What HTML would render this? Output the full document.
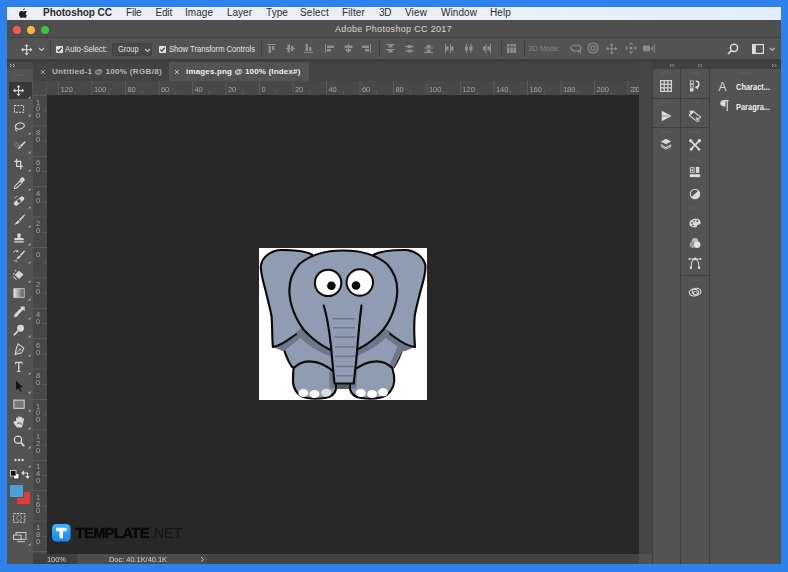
<!DOCTYPE html><html><head><meta charset="utf-8"><title>Adobe Photoshop CC 2017</title><style>
html,body{margin:0;padding:0;background:#2e82ee;}
#app{position:absolute;left:0;top:0;width:788px;height:572px;overflow:hidden;filter:blur(0.550px);}
body{width:788px;height:572px;overflow:hidden;background:#2e82ee;position:relative;font-family:"Liberation Sans",sans-serif;}
.a{position:absolute;}
.t{position:absolute;white-space:nowrap;}
svg{position:absolute;overflow:visible;}
#menubar{left:7px;top:6.800px;width:773.500px;height:13.500px;background:linear-gradient(90deg,#ecEFF5 0%,#ebeff5 60%,#e3eefa 100%);}
#title{left:7px;top:20.300px;width:773.500px;height:18px;background:#4f4f4f;border-bottom:1.500px solid #424242;box-sizing:border-box;height:18px}
#opt{left:7px;top:38px;width:773.500px;height:21px;background:#535353;}
#gap{left:7px;top:59px;width:773.500px;height:3px;background:#3e3e3e;}
#tabs{left:32px;top:62px;width:607px;height:19px;background:#444;}
#tools{left:7px;top:62px;width:26px;height:502px;background:#535353;}
#canvas{left:47px;top:94.500px;width:592px;height:459.500px;background:#282828;}
#hr{left:32px;top:81px;width:607px;height:14px;background:#484848;}
#vr{left:33px;top:95px;width:14px;height:459px;background:#484848;}
#status{left:32px;top:554px;width:607px;height:10px;background:#444;}
#vs{left:639px;top:62px;width:13px;height:502px;background:#464646;}
#panels{left:652px;top:62px;width:128.500px;height:502px;background:#535353;}
.cb{position:absolute;width:7px;height:7px;background:#e4e4e4;border-radius:1px;}
</style></head><body><div id="app">
<div id="menubar" class="a"></div>
<svg style="left:18px;top:7.500px" width="10" height="11" viewBox="0 0 10 11"><path d="M6.9 0.2c0 .9-.8 1.900-1.800 1.900C5 1.200 5.900 .3 6.900 .2zM8.800 3.900C8.100 4.300 7.700 4.900 7.700 5.700c0 .9.500 1.600 1.300 1.900-.3.900-1.200 2.400-2.100 2.400-.6 0-.9-.4-1.700-.4s-1.100.4-1.700.4C2.400 10 1 7.900 1 5.900 1 4 2.200 3 3.400 3c.7 0 1.300.4 1.800.4.400 0 1.100-.5 2-.5.700 0 1.300.4 1.600 1z" fill="#1c1c20"/></svg>
<span class="t" id="m0" style="left:43px;top:8.20px;font-size:10px;line-height:10px;color:#2a2a30;letter-spacing:-0.037px;font-weight:bold;">Photoshop CC</span>
<span class="t" id="m1" style="left:126px;top:8.20px;font-size:10px;line-height:10px;color:#2a2a30;letter-spacing:-0.156px;">File</span>
<span class="t" id="m2" style="left:155.5px;top:8.20px;font-size:10px;line-height:10px;color:#2a2a30;letter-spacing:-0.184px;">Edit</span>
<span class="t" id="m3" style="left:185px;top:8.20px;font-size:10px;line-height:10px;color:#2a2a30;letter-spacing:0.041px;">Image</span>
<span class="t" id="m4" style="left:227px;top:8.20px;font-size:10px;line-height:10px;color:#2a2a30;letter-spacing:-0.003px;">Layer</span>
<span class="t" id="m5" style="left:266px;top:8.20px;font-size:10px;line-height:10px;color:#2a2a30;letter-spacing:0.078px;">Type</span>
<span class="t" id="m6" style="left:300px;top:8.20px;font-size:10px;line-height:10px;color:#2a2a30;letter-spacing:0.201px;">Select</span>
<span class="t" id="m7" style="left:342px;top:8.20px;font-size:10px;line-height:10px;color:#2a2a30;letter-spacing:0.128px;">Filter</span>
<span class="t" id="m8" style="left:379px;top:8.20px;font-size:10px;line-height:10px;color:#2a2a30;letter-spacing:-0.398px;">3D</span>
<span class="t" id="m9" style="left:405px;top:8.20px;font-size:10px;line-height:10px;color:#2a2a30;letter-spacing:0.125px;">View</span>
<span class="t" id="m10" style="left:441px;top:8.20px;font-size:10px;line-height:10px;color:#2a2a30;letter-spacing:0.070px;">Window</span>
<span class="t" id="m11" style="left:490px;top:8.20px;font-size:10px;line-height:10px;color:#2a2a30;letter-spacing:0.105px;">Help</span>
<div id="title" class="a"></div>
<div class="a" style="left:12.5px;top:26px;width:8px;height:8px;border-radius:50%;background:#f25b57"></div>
<div class="a" style="left:26.8px;top:26px;width:8px;height:8px;border-radius:50%;background:#f5b93a"></div>
<div class="a" style="left:41px;top:26px;width:8px;height:8px;border-radius:50%;background:#3ec144"></div>
<span class="t" id="ttl" style="left:335px;top:25.00px;font-size:9px;line-height:9px;color:#d6d6d6;letter-spacing:0.322px;">Adobe Photoshop CC 2017</span>
<div id="opt" class="a"></div>
<div id="gap" class="a"></div>
<svg style="left:20.8px;top:43.599999999999994px" width="11.399999999999999" height="11.399999999999999" viewBox="-6 -6 12 12"><path d="M0-6L2.200-3.500H.6V-.6H3.500V-2.200L6 0 3.500 2.200V.6H.6V3.500H2.200L0 6-2.200 3.500H-.6V.6H-3.500V2.200L-6 0-3.500-2.200V-.6H-.6V-3.500H-2.200Z" fill="#dcdcdc"/></svg>
<svg style="left:38.5px;top:48.25px" width="5" height="2.5" viewBox="0 0 5 2.5"><path d="M0 0L2.5 2.5L5 0" fill="none" stroke="#c8c8c8" stroke-width="1.1"/></svg>
<div class="a" style="left:50px;top:41px;width:1px;height:16px;background:#3f3f3f"></div>
<div class="cb" style="left:55.5px;top:45.5px"></div><svg style="left:55.5px;top:45.5px" width="7" height="7" viewBox="0 0 7 7"><path d="M1.400 3.600L2.900 5.100L5.700 1.700" fill="none" stroke="#3a3a3a" stroke-width="1.300"/></svg>
<span class="t" id="o1" style="left:65px;top:44.15px;font-size:9.5px;line-height:9.5px;color:#e4e4e4;transform:scaleX(0.8116);transform-origin:0 50%;">Auto-Select:</span>
<div class="a" style="left:112px;top:42.500px;width:40px;height:13px;background:#484848;border:1px solid #424242;box-sizing:border-box;border-radius:1px"></div>
<span class="t" id="o2" style="left:118px;top:44.15px;font-size:9.5px;line-height:9.5px;color:#e4e4e4;transform:scaleX(0.7763);transform-origin:0 50%;">Group</span>
<svg style="left:144.5px;top:48.55px" width="5" height="2.5" viewBox="0 0 5 2.5"><path d="M0 0L2.5 2.5L5 0" fill="none" stroke="#c8c8c8" stroke-width="1.1"/></svg>
<div class="cb" style="left:158.5px;top:45.5px"></div><svg style="left:158.5px;top:45.5px" width="7" height="7" viewBox="0 0 7 7"><path d="M1.400 3.600L2.900 5.100L5.700 1.700" fill="none" stroke="#3a3a3a" stroke-width="1.300"/></svg>
<span class="t" id="o3" style="left:169px;top:44.15px;font-size:9.5px;line-height:9.5px;color:#e4e4e4;transform:scaleX(0.8023);transform-origin:0 50%;">Show Transform Controls</span>
<div class="a" style="left:261px;top:41px;width:1px;height:16px;background:#3f3f3f"></div>
<svg style="left:266.5px;top:44.2px" width="9" height="9" viewBox="0 0 9 9" fill="#8e8e8e"><rect x="0" y="0" width="9" height="1"/><rect x="1.500" y="2" width="2.500" height="7"/><rect x="5" y="2" width="2.500" height="4"/></svg>
<svg style="left:285.5px;top:44.2px" width="9" height="9" viewBox="0 0 9 9" fill="#8e8e8e"><rect x="0" y="4" width="9" height="1"/><rect x="1.500" y="0.500" width="2.500" height="8"/><rect x="5" y="2" width="2.500" height="5"/></svg>
<svg style="left:303.5px;top:44.2px" width="9" height="9" viewBox="0 0 9 9" fill="#8e8e8e"><rect x="0" y="8" width="9" height="1"/><rect x="1.500" y="0" width="2.500" height="7"/><rect x="5" y="3" width="2.500" height="4"/></svg>
<svg style="left:325.0px;top:44.2px" width="9" height="9" viewBox="0 0 9 9" fill="#8e8e8e"><rect x="0" y="0" width="1" height="9"/><rect x="2" y="1.500" width="7" height="2.500"/><rect x="2" y="5" width="4" height="2.500"/></svg>
<svg style="left:343.5px;top:44.2px" width="9" height="9" viewBox="0 0 9 9" fill="#8e8e8e"><rect x="4" y="0" width="1" height="9"/><rect x="0.500" y="1.500" width="8" height="2.500"/><rect x="2" y="5" width="5" height="2.500"/></svg>
<svg style="left:361.5px;top:44.2px" width="9" height="9" viewBox="0 0 9 9" fill="#8e8e8e"><rect x="8" y="0" width="1" height="9"/><rect x="0" y="1.500" width="7" height="2.500"/><rect x="3" y="5" width="4" height="2.500"/></svg>
<svg style="left:386.0px;top:44.2px" width="9" height="9" viewBox="0 0 9 9" fill="#8e8e8e"><rect x="0" y="0" width="9" height="1"/><rect x="0" y="5" width="9" height="1"/><rect x="2.500" y="1" width="4" height="2.500"/><rect x="2.500" y="6" width="4" height="2.500"/></svg>
<svg style="left:404.5px;top:44.2px" width="9" height="9" viewBox="0 0 9 9" fill="#8e8e8e"><rect x="0" y="2" width="9" height="1"/><rect x="0" y="6.500" width="9" height="1"/><rect x="2.500" y="1" width="4" height="3"/><rect x="2.500" y="5.500" width="4" height="3"/></svg>
<svg style="left:424.0px;top:44.2px" width="9" height="9" viewBox="0 0 9 9" fill="#8e8e8e"><rect x="0" y="3.500" width="9" height="1"/><rect x="0" y="8" width="9" height="1"/><rect x="2.500" y="1" width="4" height="2.500"/><rect x="2.500" y="5.500" width="4" height="2.500"/></svg>
<svg style="left:445.0px;top:44.2px" width="9" height="9" viewBox="0 0 9 9" fill="#8e8e8e"><rect x="0" y="0" width="1" height="9"/><rect x="5" y="0" width="1" height="9"/><rect x="1" y="2.500" width="2.500" height="4"/><rect x="6" y="2.500" width="2.500" height="4"/></svg>
<svg style="left:463.5px;top:44.2px" width="9" height="9" viewBox="0 0 9 9" fill="#8e8e8e"><rect x="2" y="0" width="1" height="9"/><rect x="6.500" y="0" width="1" height="9"/><rect x="1" y="2.500" width="3" height="4"/><rect x="5.500" y="2.500" width="3" height="4"/></svg>
<svg style="left:482.0px;top:44.2px" width="9" height="9" viewBox="0 0 9 9" fill="#8e8e8e"><rect x="3.500" y="0" width="1" height="9"/><rect x="8" y="0" width="1" height="9"/><rect x="1" y="2.500" width="2.500" height="4"/><rect x="5.500" y="2.500" width="2.500" height="4"/></svg>
<svg style="left:507.0px;top:44.2px" width="9" height="9" viewBox="0 0 9 9" fill="#8e8e8e"><rect x="0" y="0" width="2.500" height="2.500"/><rect x="3.300" y="0" width="2.500" height="2.500"/><rect x="6.500" y="0" width="2.500" height="2.500"/><rect x="0" y="3.500" width="2.500" height="5.500"/><rect x="3.300" y="3.500" width="2.500" height="5.500"/><rect x="6.500" y="3.500" width="2.500" height="5.500"/></svg>
<div class="a" style="left:379px;top:41px;width:1px;height:16px;background:#3f3f3f"></div>
<div class="a" style="left:501px;top:41px;width:1px;height:16px;background:#3f3f3f"></div>
<div class="a" style="left:524px;top:41px;width:1px;height:16px;background:#3f3f3f"></div>
<span class="t" id="o4" style="left:528px;top:45.05px;font-size:7.5px;line-height:7.5px;color:#858585;letter-spacing:-0.002px;">3D Mode:</span>
<svg style="left:569.500px;top:42.200px" width="12" height="12" viewBox="0 0 12 12" fill="none" stroke="#8a8a8a" stroke-width="1.200"><ellipse cx="6" cy="6" rx="5" ry="3"/><path d="M8 9.500l2.500 1v-2.600" /></svg>
<svg style="left:587px;top:42.200px" width="12" height="12" viewBox="0 0 12 12" fill="none" stroke="#8a8a8a" stroke-width="1.200"><circle cx="6" cy="6" r="5"/><circle cx="6" cy="6" r="2.200"/></svg>
<svg style="left:606.0999999999999px;top:42.5px" width="11.399999999999999" height="11.399999999999999" viewBox="-6 -6 12 12"><path d="M0-6L2.200-3.500H.6V-.6H3.500V-2.200L6 0 3.500 2.200V.6H.6V3.500H2.200L0 6-2.200 3.500H-.6V.6H-3.500V2.200L-6 0-3.500-2.200V-.6H-.6V-3.500H-2.200Z" fill="#8a8a8a"/></svg>
<svg style="left:624.500px;top:42.200px" width="12" height="12" viewBox="-6 -6 12 12" fill="#8a8a8a"><path d="M0-6L2-3.500H-2ZM0 6L2 3.500H-2ZM-6 0L-3.500-2V2ZM6 0L3.500-2V2Z"/><circle r="1.600"/></svg>
<svg style="left:643px;top:43.700px" width="12" height="9" viewBox="0 0 12 9" fill="#8a8a8a"><rect x="0" y="1.500" width="7" height="6" rx="1"/><path d="M7.500 4.500L10 2V7Z"/><rect x="10.800" y="0.500" width="1" height="8"/></svg>
<svg style="left:727px;top:42.500px" width="12" height="12" viewBox="0 0 12 12" fill="none" stroke="#dcdcdc" stroke-width="1.500"><circle cx="7" cy="4.800" r="3.600"/><path d="M4.400 7.600L1 11"/></svg>
<svg style="left:752px;top:43.500px" width="12" height="10" viewBox="0 0 12 10"><rect x="0.600" y="0.600" width="10.800" height="8.800" fill="none" stroke="#dcdcdc" stroke-width="1.200"/><rect x="0.600" y="0.600" width="3.200" height="8.800" fill="#dcdcdc"/></svg>
<svg style="left:770.25px;top:48.15px" width="4.5" height="2.3" viewBox="0 0 4.5 2.3"><path d="M0 0L2.25 2.3L4.5 0" fill="none" stroke="#c8c8c8" stroke-width="1.1"/></svg>
<div id="tabs" class="a"></div>
<div class="a" style="left:33px;top:62px;width:135px;height:19px;background:#434343"></div>
<div class="a" style="left:168.500px;top:62px;width:140.500px;height:19px;background:#535353"></div>
<svg style="left:41px;top:69.5px" width="4" height="4" viewBox="0 0 4 4"><path d="M0 0L4 4M4 0L0 4" stroke="#a8a8a8" stroke-width="0.900"/></svg>
<span class="t" id="tab1" style="left:52px;top:67.80px;font-size:8px;line-height:8px;color:#b8b8b8;letter-spacing:0.336px;font-weight:bold;">Untitled-1 @ 100% (RGB/8)</span>
<svg style="left:174.5px;top:69.5px" width="4" height="4" viewBox="0 0 4 4"><path d="M0 0L4 4M4 0L0 4" stroke="#c8c8c8" stroke-width="0.900"/></svg>
<span class="t" id="tab2" style="left:186px;top:67.80px;font-size:8px;line-height:8px;color:#f0f0f0;letter-spacing:0.171px;font-weight:bold;">images.png @ 100% (Index#)</span>
<div id="hr" class="a"></div>
<div id="vr" class="a"></div>
<svg style="left:32px;top:81px" width="607" height="14" fill="#5b5b5b"><rect x="26.0" y="0" width="1" height="14"/><rect x="59.5" y="0" width="1" height="14"/><rect x="93.0" y="0" width="1" height="14"/><rect x="126.5" y="0" width="1" height="14"/><rect x="160.0" y="0" width="1" height="14"/><rect x="193.5" y="0" width="1" height="14"/><rect x="227.0" y="0" width="1" height="14"/><rect x="260.5" y="0" width="1" height="14"/><rect x="294.0" y="0" width="1" height="14"/><rect x="327.5" y="0" width="1" height="14"/><rect x="361.0" y="0" width="1" height="14"/><rect x="394.5" y="0" width="1" height="14"/><rect x="428.0" y="0" width="1" height="14"/><rect x="461.5" y="0" width="1" height="14"/><rect x="495.0" y="0" width="1" height="14"/><rect x="528.5" y="0" width="1" height="14"/><rect x="562.0" y="0" width="1" height="14"/><rect x="595.5" y="0" width="1" height="14"/><rect x="42.8" y="10" width="1" height="4"/><rect x="76.2" y="10" width="1" height="4"/><rect x="109.8" y="10" width="1" height="4"/><rect x="143.2" y="10" width="1" height="4"/><rect x="176.8" y="10" width="1" height="4"/><rect x="210.2" y="10" width="1" height="4"/><rect x="243.8" y="10" width="1" height="4"/><rect x="277.2" y="10" width="1" height="4"/><rect x="310.8" y="10" width="1" height="4"/><rect x="344.2" y="10" width="1" height="4"/><rect x="377.8" y="10" width="1" height="4"/><rect x="411.2" y="10" width="1" height="4"/><rect x="444.8" y="10" width="1" height="4"/><rect x="478.2" y="10" width="1" height="4"/><rect x="511.8" y="10" width="1" height="4"/><rect x="545.2" y="10" width="1" height="4"/><rect x="578.8" y="10" width="1" height="4"/></svg>
<span class="t" id="hr80" style="left:60.5px;top:85.55px;font-size:7.5px;line-height:7.5px;color:#a2a2a2;letter-spacing:-0.073px;">120</span>
<span class="t" id="hr100" style="left:94.0px;top:85.55px;font-size:7.5px;line-height:7.5px;color:#a2a2a2;letter-spacing:-0.073px;">100</span>
<span class="t" id="hr120" style="left:127.5px;top:85.55px;font-size:7.5px;line-height:7.5px;color:#a2a2a2;letter-spacing:-0.076px;">80</span>
<span class="t" id="hr140" style="left:161.0px;top:85.55px;font-size:7.5px;line-height:7.5px;color:#a2a2a2;letter-spacing:-0.076px;">60</span>
<span class="t" id="hr160" style="left:194.5px;top:85.55px;font-size:7.5px;line-height:7.5px;color:#a2a2a2;letter-spacing:-0.076px;">40</span>
<span class="t" id="hr180" style="left:228.0px;top:85.55px;font-size:7.5px;line-height:7.5px;color:#a2a2a2;letter-spacing:-0.076px;">20</span>
<span class="t" id="hr200" style="left:261.5px;top:85.55px;font-size:7.5px;line-height:7.5px;color:#a2a2a2;letter-spacing:-0.078px;">0</span>
<span class="t" id="hr220" style="left:295.0px;top:85.55px;font-size:7.5px;line-height:7.5px;color:#a2a2a2;letter-spacing:-0.076px;">20</span>
<span class="t" id="hr240" style="left:328.5px;top:85.55px;font-size:7.5px;line-height:7.5px;color:#a2a2a2;letter-spacing:-0.076px;">40</span>
<span class="t" id="hr260" style="left:362.0px;top:85.55px;font-size:7.5px;line-height:7.5px;color:#a2a2a2;letter-spacing:-0.076px;">60</span>
<span class="t" id="hr280" style="left:395.5px;top:85.55px;font-size:7.5px;line-height:7.5px;color:#a2a2a2;letter-spacing:-0.076px;">80</span>
<span class="t" id="hr300" style="left:429.0px;top:85.55px;font-size:7.5px;line-height:7.5px;color:#a2a2a2;letter-spacing:-0.073px;">100</span>
<span class="t" id="hr320" style="left:462.5px;top:85.55px;font-size:7.5px;line-height:7.5px;color:#a2a2a2;letter-spacing:-0.073px;">120</span>
<span class="t" id="hr340" style="left:496.0px;top:85.55px;font-size:7.5px;line-height:7.5px;color:#a2a2a2;letter-spacing:-0.073px;">140</span>
<span class="t" id="hr360" style="left:529.5px;top:85.55px;font-size:7.5px;line-height:7.5px;color:#a2a2a2;letter-spacing:-0.073px;">160</span>
<span class="t" id="hr380" style="left:563.0px;top:85.55px;font-size:7.5px;line-height:7.5px;color:#a2a2a2;letter-spacing:-0.073px;">180</span>
<span class="t" id="hr400" style="left:596.5px;top:85.55px;font-size:7.5px;line-height:7.5px;color:#a2a2a2;letter-spacing:-0.073px;">200</span>
<span class="t" id="hr420" style="left:630.0px;top:85.55px;font-size:7.5px;line-height:7.5px;color:#a2a2a2;letter-spacing:-1.338px;">220</span>
<svg style="left:33px;top:95px" width="14" height="459" fill="#5b5b5b"><rect x="0" y="0.0" width="14" height="1"/><rect x="0" y="30.4" width="14" height="1"/><rect x="0" y="60.8" width="14" height="1"/><rect x="0" y="91.2" width="14" height="1"/><rect x="0" y="121.6" width="14" height="1"/><rect x="0" y="152.0" width="14" height="1"/><rect x="0" y="182.4" width="14" height="1"/><rect x="0" y="212.8" width="14" height="1"/><rect x="0" y="243.2" width="14" height="1"/><rect x="0" y="273.6" width="14" height="1"/><rect x="0" y="304.0" width="14" height="1"/><rect x="0" y="334.4" width="14" height="1"/><rect x="0" y="364.8" width="14" height="1"/><rect x="0" y="395.2" width="14" height="1"/><rect x="0" y="425.6" width="14" height="1"/><rect x="0" y="456.0" width="14" height="1"/><rect x="10" y="15.2" width="4" height="1"/><rect x="10" y="45.6" width="4" height="1"/><rect x="10" y="76.0" width="4" height="1"/><rect x="10" y="106.4" width="4" height="1"/><rect x="10" y="136.8" width="4" height="1"/><rect x="10" y="167.2" width="4" height="1"/><rect x="10" y="197.6" width="4" height="1"/><rect x="10" y="228.0" width="4" height="1"/><rect x="10" y="258.4" width="4" height="1"/><rect x="10" y="288.8" width="4" height="1"/><rect x="10" y="319.2" width="4" height="1"/><rect x="10" y="349.6" width="4" height="1"/><rect x="10" y="380.0" width="4" height="1"/><rect x="10" y="410.4" width="4" height="1"/><rect x="10" y="440.8" width="4" height="1"/></svg>
<span class="t" style="left:35px;top:98.5px;font-size:7.500px;line-height:7px;color:#a2a2a2;width:6px;text-align:center">1</span>
<span class="t" style="left:35px;top:105.3px;font-size:7.500px;line-height:7px;color:#a2a2a2;width:6px;text-align:center">0</span>
<span class="t" style="left:35px;top:112.1px;font-size:7.500px;line-height:7px;color:#a2a2a2;width:6px;text-align:center">0</span>
<span class="t" style="left:35px;top:128.9px;font-size:7.500px;line-height:7px;color:#a2a2a2;width:6px;text-align:center">8</span>
<span class="t" style="left:35px;top:135.7px;font-size:7.500px;line-height:7px;color:#a2a2a2;width:6px;text-align:center">0</span>
<span class="t" style="left:35px;top:159.3px;font-size:7.500px;line-height:7px;color:#a2a2a2;width:6px;text-align:center">6</span>
<span class="t" style="left:35px;top:166.1px;font-size:7.500px;line-height:7px;color:#a2a2a2;width:6px;text-align:center">0</span>
<span class="t" style="left:35px;top:189.7px;font-size:7.500px;line-height:7px;color:#a2a2a2;width:6px;text-align:center">4</span>
<span class="t" style="left:35px;top:196.5px;font-size:7.500px;line-height:7px;color:#a2a2a2;width:6px;text-align:center">0</span>
<span class="t" style="left:35px;top:220.1px;font-size:7.500px;line-height:7px;color:#a2a2a2;width:6px;text-align:center">2</span>
<span class="t" style="left:35px;top:226.9px;font-size:7.500px;line-height:7px;color:#a2a2a2;width:6px;text-align:center">0</span>
<span class="t" style="left:35px;top:250.5px;font-size:7.500px;line-height:7px;color:#a2a2a2;width:6px;text-align:center">0</span>
<span class="t" style="left:35px;top:280.9px;font-size:7.500px;line-height:7px;color:#a2a2a2;width:6px;text-align:center">2</span>
<span class="t" style="left:35px;top:287.7px;font-size:7.500px;line-height:7px;color:#a2a2a2;width:6px;text-align:center">0</span>
<span class="t" style="left:35px;top:311.3px;font-size:7.500px;line-height:7px;color:#a2a2a2;width:6px;text-align:center">4</span>
<span class="t" style="left:35px;top:318.1px;font-size:7.500px;line-height:7px;color:#a2a2a2;width:6px;text-align:center">0</span>
<span class="t" style="left:35px;top:341.7px;font-size:7.500px;line-height:7px;color:#a2a2a2;width:6px;text-align:center">6</span>
<span class="t" style="left:35px;top:348.5px;font-size:7.500px;line-height:7px;color:#a2a2a2;width:6px;text-align:center">0</span>
<span class="t" style="left:35px;top:372.1px;font-size:7.500px;line-height:7px;color:#a2a2a2;width:6px;text-align:center">8</span>
<span class="t" style="left:35px;top:378.9px;font-size:7.500px;line-height:7px;color:#a2a2a2;width:6px;text-align:center">0</span>
<span class="t" style="left:35px;top:402.5px;font-size:7.500px;line-height:7px;color:#a2a2a2;width:6px;text-align:center">1</span>
<span class="t" style="left:35px;top:409.3px;font-size:7.500px;line-height:7px;color:#a2a2a2;width:6px;text-align:center">0</span>
<span class="t" style="left:35px;top:416.1px;font-size:7.500px;line-height:7px;color:#a2a2a2;width:6px;text-align:center">0</span>
<span class="t" style="left:35px;top:432.9px;font-size:7.500px;line-height:7px;color:#a2a2a2;width:6px;text-align:center">1</span>
<span class="t" style="left:35px;top:439.7px;font-size:7.500px;line-height:7px;color:#a2a2a2;width:6px;text-align:center">2</span>
<span class="t" style="left:35px;top:446.5px;font-size:7.500px;line-height:7px;color:#a2a2a2;width:6px;text-align:center">0</span>
<span class="t" style="left:35px;top:463.3px;font-size:7.500px;line-height:7px;color:#a2a2a2;width:6px;text-align:center">1</span>
<span class="t" style="left:35px;top:470.1px;font-size:7.500px;line-height:7px;color:#a2a2a2;width:6px;text-align:center">4</span>
<span class="t" style="left:35px;top:476.9px;font-size:7.500px;line-height:7px;color:#a2a2a2;width:6px;text-align:center">0</span>
<span class="t" style="left:35px;top:493.7px;font-size:7.500px;line-height:7px;color:#a2a2a2;width:6px;text-align:center">1</span>
<span class="t" style="left:35px;top:500.5px;font-size:7.500px;line-height:7px;color:#a2a2a2;width:6px;text-align:center">6</span>
<span class="t" style="left:35px;top:507.3px;font-size:7.500px;line-height:7px;color:#a2a2a2;width:6px;text-align:center">0</span>
<span class="t" style="left:35px;top:524.1px;font-size:7.500px;line-height:7px;color:#a2a2a2;width:6px;text-align:center">1</span>
<span class="t" style="left:35px;top:530.9px;font-size:7.500px;line-height:7px;color:#a2a2a2;width:6px;text-align:center">8</span>
<span class="t" style="left:35px;top:537.7px;font-size:7.500px;line-height:7px;color:#a2a2a2;width:6px;text-align:center">0</span>
<div class="a" style="left:33px;top:81px;width:14px;height:14px;background:#484848;border-right:1px dotted #585858;border-bottom:1px dotted #585858;box-sizing:border-box"></div>
<div id="canvas" class="a"></div>
<div id="status" class="a"></div>
<div class="a" style="left:32px;top:554px;width:45px;height:10px;background:#3f3f3f"></div>
<div class="a" style="left:77px;top:554px;width:130px;height:10px;background:#4c4c4c"></div>
<span class="t" id="st1" style="left:47px;top:555.55px;font-size:7.5px;line-height:7.5px;color:#d0d0d0;letter-spacing:-0.047px;">100%</span>
<span class="t" id="st2" style="left:109px;top:555.55px;font-size:7.5px;line-height:7.5px;color:#d0d0d0;letter-spacing:-0.050px;">Doc: 40.1K/40.1K</span>
<svg style="left:201px;top:556.500px" width="3" height="5" viewBox="0 0 3 5"><path d="M0 0L2.500 2.500L0 5" fill="none" stroke="#bdbdbd" stroke-width="1"/></svg>
<div id="vs" class="a"></div>
<div class="a" style="left:639px;top:554px;width:13px;height:10px;background:#515151"></div>
<div id="tools" class="a"></div>
<div class="a" style="left:9px;top:81.500px;width:23px;height:17.500px;background:#383838;border-radius:1px"></div>
<div class="a" style="left:7px;top:62px;width:26px;height:7px;background:#484848"></div>
<svg style="left:10px;top:63.800px" width="5.500" height="3" viewBox="0 0 5.500 3"><path d="M0 0L1.500 1.500L0 3M3 0L4.500 1.500L3 3" fill="none" stroke="#c4c4c4" stroke-width="0.900"/></svg>
<div class="a" style="left:14px;top:73.500px;width:11px;height:2px;background:#5a5a5a"></div>
<svg style="left:12.42px;top:84.42px" width="13.16" height="13.16" viewBox="-7 -7 14 14" preserveAspectRatio="none" fill="#d6d6d6" stroke="none"><path d="M0-6L2.200-3.500H.6V-.6H3.500V-2.200L6 0 3.500 2.200V.6H.6V3.500H2.200L0 6-2.200 3.500H-.6V.6H-3.500V2.200L-6 0-3.500-2.200V-.6H-.6V-3.500H-2.200Z"/></svg><svg style="left:28px;top:95.5px" width="2.500" height="2.500" viewBox="0 0 2.500 2.500"><path d="M2.500 0V2.500H0Z" fill="#b0b0b0"/></svg>
<svg style="left:12.98px;top:102.98px" width="12.04" height="12.04" viewBox="-7 -7 14 14" preserveAspectRatio="none" fill="#d6d6d6" stroke="none"><rect x="-5.300" y="-4" width="10.600" height="7.800" fill="none" stroke="#d6d6d6" stroke-width="1.200" stroke-dasharray="2.200 1.400"/></svg><svg style="left:28px;top:113.5px" width="2.500" height="2.500" viewBox="0 0 2.500 2.500"><path d="M2.500 0V2.500H0Z" fill="#b0b0b0"/></svg>
<svg style="left:12.98px;top:121.48px" width="12.04" height="12.04" viewBox="-7 -7 14 14" preserveAspectRatio="none" fill="#d6d6d6" stroke="none"><ellipse cx="1.200" cy="-1" rx="5.300" ry="3.600" fill="none" stroke="#d6d6d6" stroke-width="1.300" transform="rotate(-12)"/><path d="M-3.500 1.500C-4.500 3-3.500 4.500-2 5" fill="none" stroke="#d6d6d6" stroke-width="1.200"/></svg><svg style="left:28px;top:132.0px" width="2.500" height="2.500" viewBox="0 0 2.500 2.500"><path d="M2.500 0V2.500H0Z" fill="#b0b0b0"/></svg>
<svg style="left:13.98px;top:139.98px" width="12.04" height="12.04" viewBox="-7 -7 14 14" preserveAspectRatio="none" fill="#d6d6d6" stroke="none"><path d="M5.500-5.500L6.500-4.500L1.500 1L0-.5Z"/><path d="M-.5 0L1 1.500C0 3.500-2 3.500-3 3C-2 2.500-1.500 1-.5 0Z"/><circle cx="-4" cy="-1.500" r="2" fill="none" stroke="#d6d6d6" stroke-width="0.700" stroke-dasharray="1 1"/></svg><svg style="left:28px;top:150.5px" width="2.500" height="2.500" viewBox="0 0 2.500 2.500"><path d="M2.500 0V2.500H0Z" fill="#b0b0b0"/></svg>
<svg style="left:12.98px;top:157.98px" width="12.04" height="12.04" viewBox="-7 -7 14 14" preserveAspectRatio="none" fill="#d6d6d6" stroke="none"><path d="M-2.800-6V2.800H4.500M-5.500-3H2V6" fill="none" stroke="#d6d6d6" stroke-width="1.500"/></svg><svg style="left:28px;top:168.5px" width="2.500" height="2.500" viewBox="0 0 2.500 2.500"><path d="M2.500 0V2.500H0Z" fill="#b0b0b0"/></svg>
<svg style="left:12.98px;top:176.98px" width="12.04" height="12.04" viewBox="-7 -7 14 14" preserveAspectRatio="none" fill="#d6d6d6" stroke="none"><path d="M3-6.500C4.500-7.500 7.500-4.500 6.500-3L4 -.5L.5-4Z"/><path d="M1-2.500L3.500 0L-3 6L-5.500 6.500L-5 4Z" fill="none" stroke="#d6d6d6" stroke-width="1.200"/></svg><svg style="left:28px;top:187.5px" width="2.500" height="2.500" viewBox="0 0 2.500 2.500"><path d="M2.500 0V2.500H0Z" fill="#b0b0b0"/></svg>
<svg style="left:12.98px;top:194.98px" width="12.04" height="12.04" viewBox="-7 -7 14 14" preserveAspectRatio="none" fill="#d6d6d6" stroke="none"><rect x="-7" y="-2.600" width="14" height="5.200" rx="2.300" transform="rotate(-40)"/><rect x="-1.800" y="-1.800" width="3.600" height="3.600" fill="#535353" transform="rotate(-40)"/><circle cx="-4.500" cy="-4" r="0.800"/><circle cx="-2.500" cy="-5.500" r="0.700"/></svg><svg style="left:28px;top:205.5px" width="2.500" height="2.500" viewBox="0 0 2.500 2.500"><path d="M2.500 0V2.500H0Z" fill="#b0b0b0"/></svg>
<svg style="left:12.98px;top:213.98px" width="12.04" height="12.04" viewBox="-7 -7 14 14" preserveAspectRatio="none" fill="#d6d6d6" stroke="none"><path d="M6-6.500L7-5.500L1.500 1L0-.5Z"/><path d="M-.7.200L.9 1.800C0 4-2.500 5-5.500 5.500C-4 4-3.500 2-.7.200Z"/></svg><svg style="left:28px;top:224.5px" width="2.500" height="2.500" viewBox="0 0 2.500 2.500"><path d="M2.500 0V2.500H0Z" fill="#b0b0b0"/></svg>
<svg style="left:12.98px;top:231.98px" width="12.04" height="12.04" viewBox="-7 -7 14 14" preserveAspectRatio="none" fill="#d6d6d6" stroke="none"><path d="M-2-2.500C-3.500-6.500 3.500-6.500 2-2.500L1.500 0H4.500C5.500 0 5.500 1 5.500 2.500H-5.500C-5.500 1-5.500 0-4.500 0H-1.500Z"/><rect x="-5.500" y="3.800" width="11" height="1.500"/></svg><svg style="left:28px;top:242.5px" width="2.500" height="2.500" viewBox="0 0 2.500 2.500"><path d="M2.500 0V2.500H0Z" fill="#b0b0b0"/></svg>
<svg style="left:12.98px;top:250.48px" width="12.04" height="12.04" viewBox="-7 -7 14 14" preserveAspectRatio="none" fill="#d6d6d6" stroke="none"><path d="M6-6.500L7-5.500L2.500 0L1-1.500Z"/><path d="M.5-1L2 .5C1 2.500-1 3.500-3.500 4C-2.500 3-2 .8.500-1Z"/><path d="M-6.500-4.500A4 4 0 0 1-1-5.500" fill="none" stroke="#d6d6d6" stroke-width="1.100"/><path d="M-2.500-7L-.3-5L-3-4Z"/><path d="M-6 5.500L-2 6" stroke="#d6d6d6" stroke-width="1"/></svg><svg style="left:28px;top:261.0px" width="2.500" height="2.500" viewBox="0 0 2.500 2.500"><path d="M2.500 0V2.500H0Z" fill="#b0b0b0"/></svg>
<svg style="left:12.98px;top:268.98px" width="12.04" height="12.04" viewBox="-7 -7 14 14" preserveAspectRatio="none" fill="#d6d6d6" stroke="none"><path d="M-1-5L5-1.500L1 4.500L-5 1Z" transform="rotate(10)"/><path d="M-6.500 2L-3 5.500M-5.500-2.500L-6.500-.5" stroke="#d6d6d6" stroke-width="1.200"/><circle cx="-4" cy="-5" r="0.800"/></svg><svg style="left:28px;top:279.5px" width="2.500" height="2.500" viewBox="0 0 2.500 2.500"><path d="M2.500 0V2.500H0Z" fill="#b0b0b0"/></svg>
<svg style="left:12.98px;top:286.98px" width="12.04" height="12.04" viewBox="-7 -7 14 14" preserveAspectRatio="none" fill="#d6d6d6" stroke="none"><defs><linearGradient id="gr" x1="0" x2="1"><stop offset="0" stop-color="#e6e6e6"/><stop offset="1" stop-color="#555"/></linearGradient></defs><rect x="-6" y="-5" width="12" height="10" fill="url(#gr)" stroke="#d6d6d6" stroke-width="1"/></svg><svg style="left:28px;top:297.5px" width="2.500" height="2.500" viewBox="0 0 2.500 2.500"><path d="M2.500 0V2.500H0Z" fill="#b0b0b0"/></svg>
<svg style="left:12.98px;top:305.98px" width="12.04" height="12.04" viewBox="-7 -7 14 14" preserveAspectRatio="none" fill="#d6d6d6" stroke="none"><path d="M1-6.500L6.500-6.500L6.500-1L4.800-2.700L-.5 3C-1.500 4.500-3 6.500-5 6C-6.500 5.500-5.500 3-4.500 2L-2 -.5L0 -2.500L2.700-4.800Z"/></svg><svg style="left:28px;top:316.5px" width="2.500" height="2.500" viewBox="0 0 2.500 2.500"><path d="M2.500 0V2.500H0Z" fill="#b0b0b0"/></svg>
<svg style="left:12.98px;top:323.98px" width="12.04" height="12.04" viewBox="-7 -7 14 14" preserveAspectRatio="none" fill="#d6d6d6" stroke="none"><circle cx="1.800" cy="-2" r="4"/><path d="M-1 1L-6 6" stroke="#d6d6d6" stroke-width="1.800"/></svg><svg style="left:28px;top:334.5px" width="2.500" height="2.500" viewBox="0 0 2.500 2.500"><path d="M2.500 0V2.500H0Z" fill="#b0b0b0"/></svg>
<svg style="left:12.98px;top:342.98px" width="12.04" height="12.04" viewBox="-7 -7 14 14" preserveAspectRatio="none" fill="#d6d6d6" stroke="none"><path d="M-1-6L5.500-1L3 4.500L-4.500 6.500L-3-1Z" fill="none" stroke="#d6d6d6" stroke-width="1.300"/><path d="M-4.500 6.500L.5 1" stroke="#d6d6d6" stroke-width="1"/><circle cx="1" cy=".5" r="1.200"/></svg><svg style="left:28px;top:353.5px" width="2.500" height="2.500" viewBox="0 0 2.500 2.500"><path d="M2.500 0V2.500H0Z" fill="#b0b0b0"/></svg>
<svg style="left:14.24px;top:361.12px" width="9.52" height="11.76" viewBox="-7 -7 14 14" preserveAspectRatio="none" fill="#d6d6d6" stroke="none"><path d="M-5.500-6H5.500V-3H4.500C4.300-4.300 4-4.700 2.500-4.700H1V4C1 5 1.300 5.200 2.800 5.300V6.200H-2.800V5.300C-1.300 5.200-1 5-1 4V-4.700H-2.500C-4-4.700-4.300-4.300-4.500-3H-5.500Z"/></svg><svg style="left:28px;top:371.5px" width="2.500" height="2.500" viewBox="0 0 2.500 2.500"><path d="M2.500 0V2.500H0Z" fill="#b0b0b0"/></svg>
<svg style="left:12.98px;top:379.98px" width="12.04" height="12.04" viewBox="-7 -7 14 14" preserveAspectRatio="none" fill="#d6d6d6" stroke="none"><path d="M-3.500-6.500L4.500 1.500L1 1.800L3 6L1.200 6.800L-.8 2.600L-3.500 5Z" fill="#161616"/></svg><svg style="left:28px;top:390.5px" width="2.500" height="2.500" viewBox="0 0 2.500 2.500"><path d="M2.500 0V2.500H0Z" fill="#b0b0b0"/></svg>
<svg style="left:12.98px;top:397.98px" width="12.04" height="12.04" viewBox="-7 -7 14 14" preserveAspectRatio="none" fill="#d6d6d6" stroke="none"><rect x="-6" y="-4.500" width="12" height="9.500" fill="#777" stroke="#d6d6d6" stroke-width="1.200"/></svg><svg style="left:28px;top:408.5px" width="2.500" height="2.500" viewBox="0 0 2.500 2.500"><path d="M2.500 0V2.500H0Z" fill="#b0b0b0"/></svg>
<svg style="left:12.98px;top:416.48px" width="12.04" height="12.04" viewBox="-7 -7 14 14" preserveAspectRatio="none" fill="#d6d6d6" stroke="none"><path d="M-3-1.500C-4.500-4.500-2.500-6.500-1.500-4C-1.500-7.500 1-7.500 1-4.500C1.500-7 4-6.500 3.500-3.500C4.500-5.500 6.500-4.500 5.500-2C4.500 1 5 3 3 6.500H-2.500C-3.500 4-6 2.500-6.500 .5C-6.500-1-4.500-1-3-1.500Z"/><path d="M-2 2C0 0 2.500 1 3 3" fill="none" stroke="#535353" stroke-width="1.200"/></svg><svg style="left:28px;top:427.0px" width="2.500" height="2.500" viewBox="0 0 2.500 2.500"><path d="M2.500 0V2.500H0Z" fill="#b0b0b0"/></svg>
<svg style="left:12.98px;top:434.98px" width="12.04" height="12.04" viewBox="-7 -7 14 14" preserveAspectRatio="none" fill="#d6d6d6" stroke="none"><circle cx="-1.200" cy="-1.500" r="4.200" fill="none" stroke="#d6d6d6" stroke-width="1.500"/><path d="M2 1.800L6 6" stroke="#d6d6d6" stroke-width="2.200"/></svg><svg style="left:28px;top:445.5px" width="2.500" height="2.500" viewBox="0 0 2.500 2.500"><path d="M2.500 0V2.500H0Z" fill="#b0b0b0"/></svg>
<svg style="left:12.98px;top:453.98px" width="12.04" height="12.04" viewBox="-7 -7 14 14" preserveAspectRatio="none" fill="#d6d6d6" stroke="none"><circle cx="-4.200" cy="0" r="1.400"/><circle cx="0" cy="0" r="1.400"/><circle cx="4.200" cy="0" r="1.400"/></svg><svg style="left:28px;top:464.5px" width="2.500" height="2.500" viewBox="0 0 2.500 2.500"><path d="M2.500 0V2.500H0Z" fill="#b0b0b0"/></svg>
<svg style="left:10px;top:469.500px" width="10" height="10" viewBox="0 0 10 10"><rect x="3.500" y="3.500" width="5.500" height="5.500" fill="#fff" stroke="#222" stroke-width="0.800"/><rect x="0.500" y="0.500" width="5.500" height="5.500" fill="#111" stroke="#ddd" stroke-width="0.800"/></svg>
<svg style="left:21px;top:470px" width="9" height="9" viewBox="0 0 9 9"><path d="M2 3H6.500V8" fill="none" stroke="#d6d6d6" stroke-width="1.200"/><path d="M0 3L3 .5V5.500Z" fill="#d6d6d6"/><path d="M4.200 6L6.500 9L8.800 6Z" fill="#d6d6d6"/></svg>
<div class="a" style="left:16.500px;top:492px;width:13px;height:12px;background:#e53a3a"></div>
<div class="a" style="left:10px;top:485px;width:12.500px;height:12px;background:#4a9fd9;outline:1px solid #535353"></div>
<svg style="left:13px;top:512.500px" width="12.500" height="9.800" viewBox="0 0 14 11"><rect x="0.600" y="0.600" width="12.800" height="9.800" fill="none" stroke="#d6d6d6" stroke-width="1.100" stroke-dasharray="2.500 1.200"/><circle cx="7" cy="5.500" r="2.800" fill="none" stroke="#d6d6d6" stroke-width="1" stroke-dasharray="1.200 1"/></svg>
<svg style="left:12.500px;top:531.500px" width="13.500" height="10.200" viewBox="0 0 16 12"><rect x="3.600" y="0.600" width="11.800" height="8" fill="none" stroke="#d6d6d6" stroke-width="1.100"/><rect x="0.600" y="3.600" width="9" height="5" fill="#535353" stroke="#d6d6d6" stroke-width="1.100"/><path d="M5 11.400H14" stroke="#d6d6d6" stroke-width="1.100"/></svg>
<svg style="left:28px;top:543px" width="2.500" height="2.500" viewBox="0 0 2.500 2.500"><path d="M2.500 0V2.500H0Z" fill="#b0b0b0"/></svg>
<div id="panels" class="a"></div>
<div class="a" style="left:652px;top:62px;width:128.500px;height:7px;background:#414141"></div>
<svg style="left:670.0px;top:63.8px" width="5" height="3" viewBox="0 0 5 3"><path d="M0 0L1.500 1.500L0 3M2.500 0L4 1.500L2.500 3" fill="none" stroke="#a8a8a8" stroke-width="0.800"/></svg>
<svg style="left:698.0px;top:63.8px" width="5" height="3" viewBox="0 0 5 3"><path d="M0 0L1.500 1.500L0 3M2.500 0L4 1.500L2.500 3" fill="none" stroke="#a8a8a8" stroke-width="0.800"/></svg>
<svg style="left:771.5px;top:63.8px" width="5" height="3" viewBox="0 0 5 3"><path d="M0 0L1.500 1.500L0 3M2.500 0L4 1.500L2.500 3" fill="none" stroke="#a8a8a8" stroke-width="0.800"/></svg>
<div class="a" style="left:652px;top:62px;width:1px;height:502px;background:#3f3f3f"></div>
<div class="a" style="left:680px;top:62px;width:1px;height:502px;background:#3f3f3f"></div>
<div class="a" style="left:708.5px;top:62px;width:1px;height:502px;background:#3f3f3f"></div>
<div class="a" style="left:652px;top:97.5px;width:28px;height:1px;background:#3f3f3f"></div>
<div class="a" style="left:652px;top:127px;width:28px;height:1px;background:#3f3f3f"></div>
<div class="a" style="left:680px;top:97.5px;width:29px;height:1px;background:#3f3f3f"></div>
<div class="a" style="left:680px;top:127px;width:29px;height:1px;background:#3f3f3f"></div>
<div class="a" style="left:680px;top:275px;width:29px;height:1px;background:#3f3f3f"></div>
<div class="a" style="left:661.0px;top:72px;width:10px;height:2px;background:#595959"></div>
<div class="a" style="left:661.0px;top:101px;width:10px;height:2px;background:#595959"></div>
<div class="a" style="left:661.0px;top:130.5px;width:10px;height:2px;background:#595959"></div>
<div class="a" style="left:690.0px;top:72px;width:10px;height:2px;background:#595959"></div>
<div class="a" style="left:690.0px;top:101px;width:10px;height:2px;background:#595959"></div>
<div class="a" style="left:690.0px;top:130.5px;width:10px;height:2px;background:#595959"></div>
<div class="a" style="left:690.0px;top:159px;width:10px;height:2px;background:#595959"></div>
<div class="a" style="left:690.0px;top:207px;width:10px;height:2px;background:#595959"></div>
<div class="a" style="left:690.0px;top:278.5px;width:10px;height:2px;background:#595959"></div>
<div class="a" style="left:737.5px;top:72px;width:14px;height:2px;background:#595959"></div>
<svg style="left:659.98px;top:80.48px" width="12.04" height="12.04" viewBox="-7.0 -7.0 14 14" fill="#dadada"><rect x="-6.500" y="-6.500" width="13" height="13" fill="none" stroke="#dadada" stroke-width="1"/><rect x="-6.0" y="-6.0" width="3.600" height="3.600" fill="none" stroke="#dadada" stroke-width="0.900"/><rect x="-6.0" y="-1.8" width="3.600" height="3.600" fill="none" stroke="#dadada" stroke-width="0.900"/><rect x="-6.0" y="2.4" width="3.600" height="3.600" fill="none" stroke="#dadada" stroke-width="0.900"/><rect x="-1.8" y="-6.0" width="3.600" height="3.600" fill="none" stroke="#dadada" stroke-width="0.900"/><rect x="-1.8" y="-1.8" width="3.600" height="3.600" fill="none" stroke="#dadada" stroke-width="0.900"/><rect x="-1.8" y="2.4" width="3.600" height="3.600" fill="none" stroke="#dadada" stroke-width="0.900"/><rect x="2.4" y="-6.0" width="3.600" height="3.600" fill="none" stroke="#dadada" stroke-width="0.900"/><rect x="2.4" y="-1.8" width="3.600" height="3.600" fill="none" stroke="#dadada" stroke-width="0.900"/><rect x="2.4" y="2.4" width="3.600" height="3.600" fill="none" stroke="#dadada" stroke-width="0.900"/></svg>
<svg style="left:688.98px;top:80.48px" width="12.04" height="12.04" viewBox="-7.0 -7.0 14 14" fill="#dadada"><rect x="-5.500" y="-6" width="3.500" height="3" fill="none" stroke="#dadada" stroke-width="0.900"/><rect x="-5.500" y="-1.800" width="3.500" height="3" fill="none" stroke="#dadada" stroke-width="0.900"/><rect x="-5.800" y="2.500" width="4" height="3.800"/><path d="M1-5.500C5-6 6 0 2 2" fill="none" stroke="#dadada" stroke-width="1.700"/><path d="M-.5 1L3.500 4L3.500-.5Z"/></svg>
<svg style="left:660.48px;top:109.98px" width="12.04" height="12.04" viewBox="-7.0 -7.0 14 14" fill="#dadada"><path d="M-5-6L6.500 0L-5 6Z"/><path d="M-5 0H3" stroke="#535353" stroke-width="0.600"/></svg>
<svg style="left:688.98px;top:109.98px" width="12.04" height="12.04" viewBox="-7.0 -7.0 14 14" fill="#dadada"><rect x="-6" y="-3" width="12" height="6.500" fill="none" stroke="#dadada" stroke-width="1.300" transform="rotate(38)"/><path d="M-6.500-6.500L-1-5L-5-1Z"/><path d="M1 1L6.500 3L4 4L6 6.500L5 7L3 4.500L1.500 6Z" stroke="#535353" stroke-width="0.500"/></svg>
<svg style="left:659.98px;top:138.48px" width="12.04" height="12.04" viewBox="-7.0 -7.0 14 14" fill="#dadada"><path d="M0-6L6-2.800L0 .4L-6-2.800Z"/><path d="M-6 .2L0 3.400L6 .2V1.800L0 5L-6 1.800Z"/><path d="M-6 2.800L0 6L6 2.800" fill="none" stroke="#dadada" stroke-width="1"/></svg>
<svg style="left:688.98px;top:138.98px" width="12.04" height="12.04" viewBox="-7.0 -7.0 14 14" fill="#dadada"><path d="M-5.500-5.500L5 5" stroke="#dadada" stroke-width="2"/><path d="M5.500-5.500L-5 5" stroke="#dadada" stroke-width="2"/><circle cx="-5" cy="-5" r="2"/><circle cx="5" cy="-5" r="2"/><circle cx="-4.500" cy="5" r="1.600"/><circle cx="4.500" cy="5" r="1.600"/></svg>
<svg style="left:688.98px;top:165.98px" width="12.04" height="12.04" viewBox="-7.0 -7.0 14 14" fill="#dadada"><rect x="-5.500" y="-5" width="4.500" height="5.500" fill="none" stroke="#dadada" stroke-width="1"/><circle cx="-3.200" cy="-2.200" r="1.200"/><rect x="1" y="-6" width="4" height="7"/><rect x="-6" y="2.500" width="12" height="3.500"/></svg>
<svg style="left:688.98px;top:187.98px" width="12.04" height="12.04" viewBox="-7.0 -7.0 14 14" fill="#dadada"><circle r="5.500" fill="none" stroke="#dadada" stroke-width="1.200"/><path d="M-3.900 3.900A5.500 5.500 0 0 0 3.900-3.900Z" /><path d="M3.900-3.900A5.500 5.500 0 0 1 -3.900 3.900" /></svg>
<svg style="left:688.98px;top:216.98px" width="12.04" height="12.04" viewBox="-7.0 -7.0 14 14" fill="#dadada"><path d="M-6.500 1C-6.500-3-3-5 1-5C5-5 7-2.500 6.500 0C6 2.500 3.500 1.500 2.500 2.500C1.500 3.800 3 5 .5 5C-3.500 5-6.500 3.500-6.500 1Z"/><circle cx="-3.500" cy="0" r="1.100" fill="#535353"/><circle cx="-1" cy="-2.500" r="1.100" fill="#535353"/><circle cx="2.500" cy="-2.300" r="1.100" fill="#535353"/><circle cx="-2.500" cy="2.800" r="1.100" fill="#535353"/></svg>
<svg style="left:688.98px;top:236.98px" width="12.04" height="12.04" viewBox="-7.0 -7.0 14 14" fill="#dadada"><circle cx="0" cy="-2" r="3.800" fill="#bdbdbd"/><circle cx="-2.500" cy="2" r="3.800" fill="#9a9a9a"/><circle cx="2.500" cy="2" r="3.800" fill="#e2e2e2"/></svg>
<svg style="left:688.98px;top:257.48px" width="12.04" height="12.04" viewBox="-7.0 -7.0 14 14" fill="#dadada"><path d="M-4.500 5.500C-4.500 0-3-4-1-4.500M4.500 5.500C4.500 0 3-4 1-4.500M-6.500-4.800H6.500" fill="none" stroke="#dadada" stroke-width="1.200"/><rect x="-1.500" y="-6.300" width="3" height="3"/><rect x="-6" y="4.200" width="2.600" height="2.600"/><rect x="3.400" y="4.200" width="2.600" height="2.600"/><circle cx="-6.500" cy="-4.800" r="1"/><circle cx="6.500" cy="-4.800" r="1"/></svg>
<svg style="left:688.12px;top:286.84px" width="13.76" height="10.32" viewBox="-8.0 -6.0 16 12" fill="#dadada"><ellipse cx="-1" cy=".5" rx="5.500" ry="4" fill="none" stroke="#dadada" stroke-width="1.300"/><ellipse cx="2" cy="-.5" rx="5" ry="4" fill="none" stroke="#dadada" stroke-width="1.300"/><ellipse cx=".5" cy="1" rx="2.500" ry="1.800" fill="none" stroke="#dadada" stroke-width="1"/></svg>
<span class="t" id="pA" style="left:718.5px;top:80.80px;font-size:12px;line-height:12px;color:#d8d8d8;letter-spacing:0.984px;">A</span>
<span class="t" id="p1" style="left:735.5px;top:82.70px;font-size:9px;line-height:9px;color:#f0f0f0;transform:scaleX(0.8290);transform-origin:0 50%;font-weight:bold;">Charact...</span>
<svg style="left:719.500px;top:100px" width="9" height="11" viewBox="0 0 9 11"><path d="M4.500 0H8.500V1.200H7.800V11H6.600V1.200H5.500V6.500H4.500C1.800 6.500 .2 5 .2 3.200C.2 1.400 1.800 0 4.500 0Z" fill="#dadada"/></svg>
<span class="t" id="p2" style="left:735.5px;top:102.70px;font-size:9px;line-height:9px;color:#f0f0f0;transform:scaleX(0.8286);transform-origin:0 50%;font-weight:bold;">Paragra...</span>
<div id="img" class="a" style="left:259px;top:247.500px;width:168px;height:152px;background:#fff"></div>
<svg style="left:259px;top:247.500px" width="168" height="152" viewBox="0 0 168 152" stroke-linejoin="round" stroke-linecap="round">
<g stroke="#0a0a0a" stroke-width="2.150" fill="#909cb2">
<!-- body -->
<path d="M22 78C22 98 27 110 33 119L60 128H108L135 119C141 110 146 98 146.500 78Z"/>
<path d="M146.200 97.600L134.500 120.500L130 117.500C134 110 138 101 140 93Z" fill="#6d778c" stroke="none"/>
<rect x="72" y="126" width="26" height="15" fill="#6d778c" stroke="none"/>
<rect x="74" y="136.500" width="22" height="4.500" fill="#555d6c" stroke="none"/>
<!-- feet -->
<path d="M34.700 120C40 115 45 113.300 50 113.300C58 113.300 68 117 76 125L77 141C76 146 72 149 66 150C60 151 52 151 46 149.500C38 147.500 34 140 34 133C34 128 34 124 34.700 120Z"/>
<path d="M133.300 120C128 115 123 113.300 118 113.300C110 113.300 100 117 92 125L91 141C92 146 96 149 102 150C108 151 116 151 122 149.500C130 147.500 134.800 140 135.300 133C135.500 128 134.500 124 133.300 120Z"/>
<path d="M13.900 99L46 79.500L47 85.500L24.500 103.500Z" fill="#6d778c" stroke="none"/>
<path d="M156 99L122 79.500L121 85.500L145 103.500Z" fill="#6d778c" stroke="none"/>
<path d="M93 125.800L98 123L97.500 140.500L92.200 140.500Z" fill="#6d778c" stroke="none"/>
<path d="M75 125.800L70 123L70.500 140.500L75.800 140.500Z" fill="#6d778c" stroke="none"/>
<!-- ears -->
<path d="M53 6.500C47 3.500 38 1.800 21 2C12 3 4 8 2 17C1 24 4 32 6.700 43C9 53 11 60 12.500 68C13.500 80 13 90 13.900 99C20 98 28 93 36 87C40 84 44 82 46 80Z"/>
<path d="M115 6.500C121 3.500 130 1.800 147.500 2C156 3 164 8 166.300 17C167.300 24 164.500 32 161.500 43C159 53 157 60 155.700 68C154.700 80 155.300 90 156 99C150 99 142 94 134 88C130 85 126 82 123 80Z"/>
<!-- head shadow band -->
<path d="M42 80C50 91 63 99.500 76 104.500L76 110C60 105 46 96 37 85Z" fill="#6d778c" stroke="none"/>
<path d="M126 80C118 91 105 99.500 93 104.500L93 110C108 105 122 96 131 85Z" fill="#6d778c" stroke="none"/>
<!-- head -->
<path d="M84 2.500C64 2.500 50 8 40.500 16C33 24 30.300 34 30.300 43C30.600 56 36.500 71.500 45 82C53 91 64 99 76 104L93 104C105 99 116 91 124 82C132.500 71.500 138 56 138.300 43C138.300 34 135.500 24 128 16C118.500 8 104 2.500 84 2.500Z"/>
<!-- trunk -->
<path d="M64.800 57.500C69 72 72 95 73.500 115C74.500 125 75 131 75.500 135.500L94.600 135.500C95.500 128 96.500 120 97.500 110C99 92 100.500 72 102.500 57.500" />
</g>
<g stroke="#6d778c" stroke-width="1.500" fill="none" stroke-linecap="butt">
<path d="M73 70.700H95.500"/><path d="M74 79.700H96"/><path d="M75 89H96.500"/><path d="M75.500 99H96.500"/><path d="M76 108.300H96"/><path d="M76.500 118.400H95.500"/><path d="M77 127.700H95"/>
</g>
<g stroke="#0a0a0a" stroke-width="2" fill="#fff">
<circle cx="69.100" cy="34.900" r="13.200"/><circle cx="100.800" cy="34.500" r="13.200"/>
</g>
<circle cx="72.400" cy="37.800" r="4.300" fill="#0a0a0a"/><circle cx="97" cy="37.500" r="4.300" fill="#0a0a0a"/>
<g fill="#fff" stroke="none">
<ellipse cx="44.400" cy="145" rx="5" ry="4"/><ellipse cx="55.500" cy="146" rx="5" ry="4"/><ellipse cx="67.200" cy="144.700" rx="5" ry="4" fill="#dcdcdc"/>
<ellipse cx="101.800" cy="145" rx="5" ry="4"/><ellipse cx="113.200" cy="146" rx="5" ry="4"/><ellipse cx="124" cy="144.300" rx="5" ry="4"/>
</g>
</svg>
<svg style="left:51.800px;top:524.300px" width="18.500" height="17.500" viewBox="0 0 18.500 17.500"><defs><linearGradient id="lg" x1="0" y1="0" x2="0" y2="1"><stop offset="0" stop-color="#35b8fb"/><stop offset="1" stop-color="#1c86f2"/></linearGradient></defs><rect width="18.500" height="17.500" rx="4.200" fill="url(#lg)"/><path d="M4 3.700H14.500V7.200H11V14.300H7.500V7.200H4Z" fill="#fff"/></svg>
<span class="t" id="wm1" style="left:75.5px;top:526.35px;font-size:14.5px;line-height:14.5px;color:#080808;letter-spacing:-0.445px;font-weight:bold;-webkit-text-stroke:0.500px #080808;">TEMPLATE</span>
<span class="t" id="wm2" style="left:150px;top:526.35px;font-size:14.5px;line-height:14.5px;color:#141414;letter-spacing:-0.258px;">.NET</span>
</div></body></html>
